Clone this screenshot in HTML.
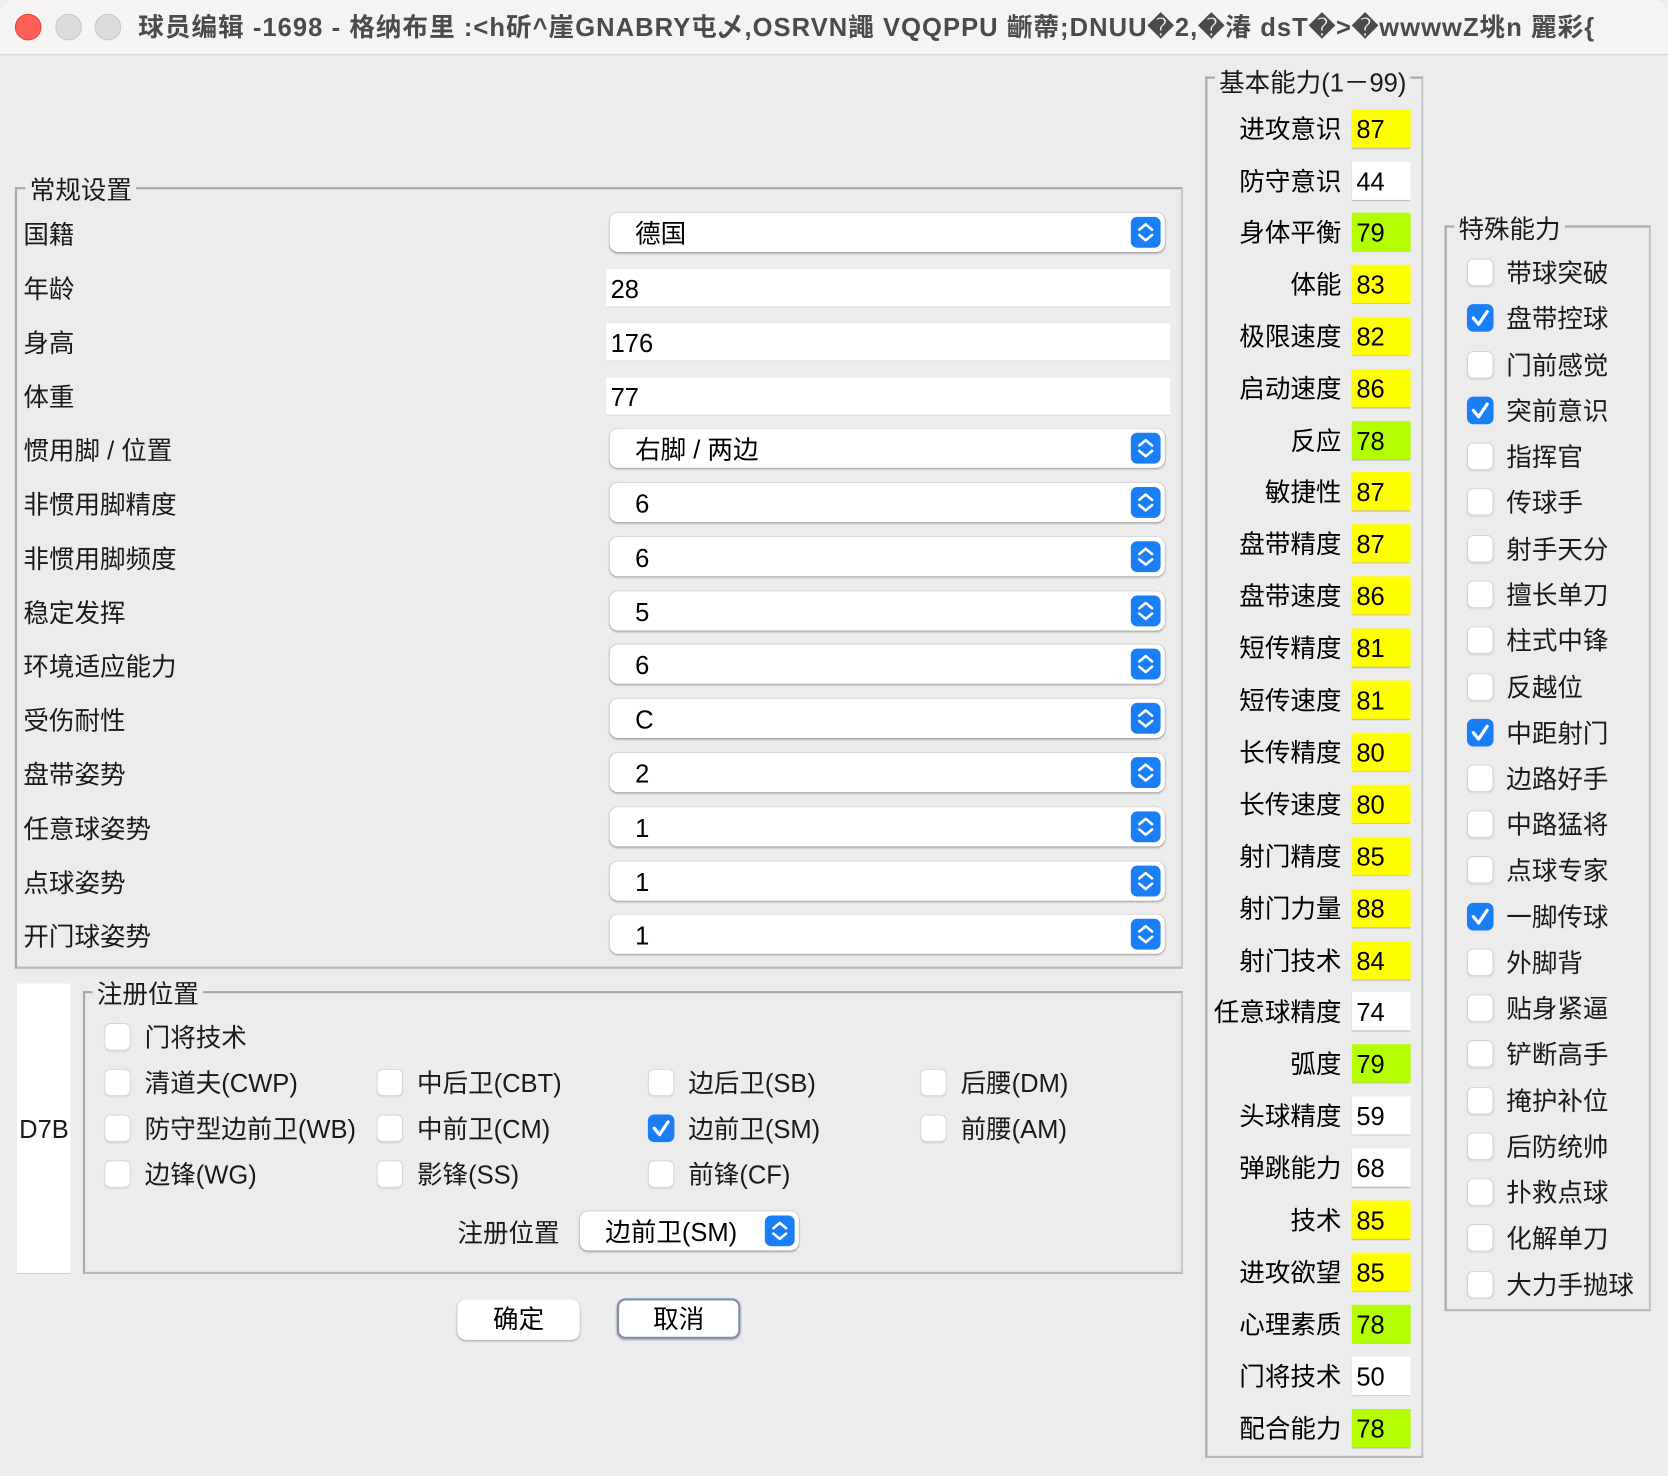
<!DOCTYPE html>
<html><head><meta charset="utf-8"><style>
html,body{margin:0;padding:0;background:#ececec;overflow:hidden}
body{width:1668px;height:1476px;font-family:"Liberation Sans","Noto Sans CJK SC",sans-serif}
#w{position:absolute;left:0;top:0;width:1568px;height:1388px;transform:scale(1.06378,1.0634);transform-origin:0 0;background:#ececec;border-radius:14px;overflow:hidden}
#w *{box-sizing:border-box}
.a{position:absolute}
.t{position:absolute;font-size:24px;line-height:40px;height:36px;color:#1a1a1a;white-space:nowrap}
.g{position:absolute;border:2px solid #a8a8a8;border-right-color:#c8c8c8;border-bottom-color:#b8b8b8}
.lg{position:absolute;font-size:24px;line-height:33px;background:#ececec;padding:0 4px;color:#1a1a1a;white-space:nowrap}
.cb{position:absolute;left:573px;width:522px;height:37px;background:#fff;border-radius:8px;box-shadow:0 1px 2px rgba(0,0,0,.3),0 0 0 .5px rgba(0,0,0,.12)}
.cb span{position:absolute;left:24px;top:0;font-size:24px;line-height:41px}
.st{position:absolute;right:4px;top:4px;width:28px;height:29px;background:#1a7ff6;border-radius:6px}
.tf{position:absolute;left:570px;width:530px;height:36px;background:#fff;border-bottom:1px solid #d8d8d8}
.tf span{position:absolute;left:4px;font-size:24px;line-height:40px}
.v{position:absolute;left:1271px;width:55px;height:36px;font-size:24px;line-height:40px;padding-left:4px;box-shadow:0 1px 1px rgba(0,0,0,.25)}
.Y{background:#ffff00}.G{background:#b3ff00}.W{background:#fff}
.r{position:absolute;right:307px;font-size:24px;line-height:40px;height:36px;white-space:nowrap}
.ck{position:absolute;width:25px;height:26px;background:#fff;border-radius:6px;box-shadow:0 0 0 1px #d4d4d4 inset,0 1px 1px rgba(0,0,0,.08)}
.ck.on{background:#1a7ff6;box-shadow:none}
.btn{position:absolute;height:38px;background:#fff;border-radius:8px;font-size:24px;line-height:40px;text-align:center;box-shadow:0 1px 2px rgba(0,0,0,.3)}
</style></head><body><div id="w">
<div class="a" style="left:0;top:0;width:1568px;height:52px;background:#f6f4f3;border-bottom:1px solid #d0d0d0"></div>
<div class="a" style="left:14px;top:13px;width:25px;height:25px;border-radius:50%;background:#fe5f57;border:1px solid #e0443e"></div>
<div class="a" style="left:52px;top:13px;width:25px;height:25px;border-radius:50%;background:#dcdcdc;border:1px solid #c8c8c8"></div>
<div class="a" style="left:89px;top:13px;width:25px;height:25px;border-radius:50%;background:#dcdcdc;border:1px solid #c8c8c8"></div>
<div class="t" style="left:130px;top:7px;font-weight:bold;color:#4b4b4b;font-size:24px;letter-spacing:1px">球员编辑 -1698 - 格纳布里 :&lt;h斫^崖GNABRY屯乄,OSRVN譝 VQQPPU 齭蔕;DNUU�2,�湷 dsT�&gt;�wwwwZ垗n 麗彩{</div>

<!-- general -->
<div class="g" style="left:14px;top:176px;width:1098px;height:735px"></div>
<div class="lg" style="left:24px;top:163px">常规设置</div>
<div class="t" style="left:22px;top:202px">国籍</div>
<div class="t" style="left:22px;top:253px">年龄</div>
<div class="t" style="left:22px;top:304px">身高</div>
<div class="t" style="left:22px;top:355px">体重</div>
<div class="t" style="left:22px;top:405px">惯用脚 / 位置</div>
<div class="t" style="left:22px;top:456px">非惯用脚精度</div>
<div class="t" style="left:22px;top:507px">非惯用脚频度</div>
<div class="t" style="left:22px;top:558px">稳定发挥</div>
<div class="t" style="left:22px;top:608px">环境适应能力</div>
<div class="t" style="left:22px;top:659px">受伤耐性</div>
<div class="t" style="left:22px;top:710px">盘带姿势</div>
<div class="t" style="left:22px;top:761px">任意球姿势</div>
<div class="t" style="left:22px;top:812px">点球姿势</div>
<div class="t" style="left:22px;top:862px">开门球姿势</div>

<div class="cb" style="top:200px"><span>德国</span><div class="st"><svg width="28" height="29"><path d="M8 12l6-5 6 5M8 17l6 5 6-5" stroke="#fff" stroke-width="2.4" fill="none" stroke-linecap="round" stroke-linejoin="round"/></svg></div></div>
<div class="tf" style="top:253px"><span>28</span></div>
<div class="tf" style="top:304px"><span>176</span></div>
<div class="tf" style="top:355px"><span>77</span></div>
<div class="cb" style="top:403px"><span>右脚 / 两边</span><div class="st"><svg width="28" height="29"><path d="M8 12l6-5 6 5M8 17l6 5 6-5" stroke="#fff" stroke-width="2.4" fill="none" stroke-linecap="round" stroke-linejoin="round"/></svg></div></div>
<div class="cb" style="top:454px"><span>6</span><div class="st"><svg width="28" height="29"><path d="M8 12l6-5 6 5M8 17l6 5 6-5" stroke="#fff" stroke-width="2.4" fill="none" stroke-linecap="round" stroke-linejoin="round"/></svg></div></div>
<div class="cb" style="top:505px"><span>6</span><div class="st"><svg width="28" height="29"><path d="M8 12l6-5 6 5M8 17l6 5 6-5" stroke="#fff" stroke-width="2.4" fill="none" stroke-linecap="round" stroke-linejoin="round"/></svg></div></div>
<div class="cb" style="top:556px"><span>5</span><div class="st"><svg width="28" height="29"><path d="M8 12l6-5 6 5M8 17l6 5 6-5" stroke="#fff" stroke-width="2.4" fill="none" stroke-linecap="round" stroke-linejoin="round"/></svg></div></div>
<div class="cb" style="top:606px"><span>6</span><div class="st"><svg width="28" height="29"><path d="M8 12l6-5 6 5M8 17l6 5 6-5" stroke="#fff" stroke-width="2.4" fill="none" stroke-linecap="round" stroke-linejoin="round"/></svg></div></div>
<div class="cb" style="top:657px"><span>C</span><div class="st"><svg width="28" height="29"><path d="M8 12l6-5 6 5M8 17l6 5 6-5" stroke="#fff" stroke-width="2.4" fill="none" stroke-linecap="round" stroke-linejoin="round"/></svg></div></div>
<div class="cb" style="top:708px"><span>2</span><div class="st"><svg width="28" height="29"><path d="M8 12l6-5 6 5M8 17l6 5 6-5" stroke="#fff" stroke-width="2.4" fill="none" stroke-linecap="round" stroke-linejoin="round"/></svg></div></div>
<div class="cb" style="top:759px"><span>1</span><div class="st"><svg width="28" height="29"><path d="M8 12l6-5 6 5M8 17l6 5 6-5" stroke="#fff" stroke-width="2.4" fill="none" stroke-linecap="round" stroke-linejoin="round"/></svg></div></div>
<div class="cb" style="top:810px"><span>1</span><div class="st"><svg width="28" height="29"><path d="M8 12l6-5 6 5M8 17l6 5 6-5" stroke="#fff" stroke-width="2.4" fill="none" stroke-linecap="round" stroke-linejoin="round"/></svg></div></div>
<div class="cb" style="top:860px"><span>1</span><div class="st"><svg width="28" height="29"><path d="M8 12l6-5 6 5M8 17l6 5 6-5" stroke="#fff" stroke-width="2.4" fill="none" stroke-linecap="round" stroke-linejoin="round"/></svg></div></div>

<!-- register -->
<div class="a" style="left:16px;top:925px;width:50px;height:273px;background:#fff;border-bottom:1px solid #ccc;overflow:hidden"><div class="t" style="left:2px;top:118px">D7B</div></div>
<div class="g" style="left:78px;top:932px;width:1034px;height:266px"></div>
<div class="lg" style="left:87px;top:919px">注册位置</div>
<div class="ck" style="left:98px;top:962px"></div><div class="t" style="left:136px;top:957px">门将技术</div>
<div class="ck" style="left:98px;top:1005px"></div><div class="t" style="left:136px;top:1000px">清道夫(CWP)</div>
<div class="ck" style="left:354px;top:1005px"></div><div class="t" style="left:392px;top:1000px">中后卫(CBT)</div>
<div class="ck" style="left:609px;top:1005px"></div><div class="t" style="left:647px;top:1000px">边后卫(SB)</div>
<div class="ck" style="left:865px;top:1005px"></div><div class="t" style="left:903px;top:1000px">后腰(DM)</div>
<div class="ck" style="left:98px;top:1048px"></div><div class="t" style="left:136px;top:1043px">防守型边前卫(WB)</div>
<div class="ck" style="left:354px;top:1048px"></div><div class="t" style="left:392px;top:1043px">中前卫(CM)</div>
<div class="ck on" style="left:609px;top:1048px"><svg width="25" height="26"><path d="M6 13l5 6 8-12" stroke="#fff" stroke-width="3" fill="none" stroke-linecap="round" stroke-linejoin="round"/></svg></div><div class="t" style="left:647px;top:1043px">边前卫(SM)</div>
<div class="ck" style="left:865px;top:1048px"></div><div class="t" style="left:903px;top:1043px">前腰(AM)</div>
<div class="ck" style="left:98px;top:1091px"></div><div class="t" style="left:136px;top:1086px">边锋(WG)</div>
<div class="ck" style="left:354px;top:1091px"></div><div class="t" style="left:392px;top:1086px">影锋(SS)</div>
<div class="ck" style="left:609px;top:1091px"></div><div class="t" style="left:647px;top:1086px">前锋(CF)</div>
<div class="t" style="left:430px;top:1141px">注册位置</div>
<div class="cb" style="left:545px;width:206px;top:1139px"><span>边前卫(SM)</span><div class="st"><svg width="28" height="29"><path d="M8 12l6-5 6 5M8 17l6 5 6-5" stroke="#fff" stroke-width="2.4" fill="none" stroke-linecap="round" stroke-linejoin="round"/></svg></div></div>

<div class="btn" style="left:430px;top:1222px;width:115px">确定</div>
<div class="btn" style="left:580px;top:1221px;width:116px;border:2px solid #7e8fa6;line-height:38px">取消</div>

<!-- stats -->
<div class="g" style="left:1133px;top:72px;width:205px;height:1299px"></div>
<div class="lg" style="left:1142px;top:62px">基本能力(1－99)</div>
<div class="r" style="top:103px">进攻意识</div><div class="v Y" style="top:103px">87</div>
<div class="r" style="top:152px">防守意识</div><div class="v W" style="top:152px">44</div>
<div class="r" style="top:200px">身体平衡</div><div class="v G" style="top:200px">79</div>
<div class="r" style="top:249px">体能</div><div class="v Y" style="top:249px">83</div>
<div class="r" style="top:298px">极限速度</div><div class="v Y" style="top:298px">82</div>
<div class="r" style="top:347px">启动速度</div><div class="v Y" style="top:347px">86</div>
<div class="r" style="top:396px">反应</div><div class="v G" style="top:396px">78</div>
<div class="r" style="top:444px">敏捷性</div><div class="v Y" style="top:444px">87</div>
<div class="r" style="top:493px">盘带精度</div><div class="v Y" style="top:493px">87</div>
<div class="r" style="top:542px">盘带速度</div><div class="v Y" style="top:542px">86</div>
<div class="r" style="top:591px">短传精度</div><div class="v Y" style="top:591px">81</div>
<div class="r" style="top:640px">短传速度</div><div class="v Y" style="top:640px">81</div>
<div class="r" style="top:689px">长传精度</div><div class="v Y" style="top:689px">80</div>
<div class="r" style="top:738px">长传速度</div><div class="v Y" style="top:738px">80</div>
<div class="r" style="top:787px">射门精度</div><div class="v Y" style="top:787px">85</div>
<div class="r" style="top:836px">射门力量</div><div class="v Y" style="top:836px">88</div>
<div class="r" style="top:885px">射门技术</div><div class="v Y" style="top:885px">84</div>
<div class="r" style="top:933px">任意球精度</div><div class="v W" style="top:933px">74</div>
<div class="r" style="top:982px">弧度</div><div class="v G" style="top:982px">79</div>
<div class="r" style="top:1031px">头球精度</div><div class="v W" style="top:1031px">59</div>
<div class="r" style="top:1080px">弹跳能力</div><div class="v W" style="top:1080px">68</div>
<div class="r" style="top:1129px">技术</div><div class="v Y" style="top:1129px">85</div>
<div class="r" style="top:1178px">进攻欲望</div><div class="v Y" style="top:1178px">85</div>
<div class="r" style="top:1227px">心理素质</div><div class="v G" style="top:1227px">78</div>
<div class="r" style="top:1276px">门将技术</div><div class="v W" style="top:1276px">50</div>
<div class="r" style="top:1325px">配合能力</div><div class="v G" style="top:1325px">78</div>

<!-- special -->
<div class="g" style="left:1358px;top:212px;width:194px;height:1021px"></div>
<div class="lg" style="left:1367px;top:200px">特殊能力</div>
<div class="ck" style="left:1379px;top:243px"></div><div class="t" style="left:1416px;top:238px">带球突破</div>
<div class="ck on" style="left:1379px;top:286px"><svg width="25" height="26"><path d="M6 13l5 6 8-12" stroke="#fff" stroke-width="3" fill="none" stroke-linecap="round" stroke-linejoin="round"/></svg></div><div class="t" style="left:1416px;top:281px">盘带控球</div>
<div class="ck" style="left:1379px;top:330px"></div><div class="t" style="left:1416px;top:325px">门前感觉</div>
<div class="ck on" style="left:1379px;top:373px"><svg width="25" height="26"><path d="M6 13l5 6 8-12" stroke="#fff" stroke-width="3" fill="none" stroke-linecap="round" stroke-linejoin="round"/></svg></div><div class="t" style="left:1416px;top:368px">突前意识</div>
<div class="ck" style="left:1379px;top:416px"></div><div class="t" style="left:1416px;top:411px">指挥官</div>
<div class="ck" style="left:1379px;top:459px"></div><div class="t" style="left:1416px;top:454px">传球手</div>
<div class="ck" style="left:1379px;top:503px"></div><div class="t" style="left:1416px;top:498px">射手天分</div>
<div class="ck" style="left:1379px;top:546px"></div><div class="t" style="left:1416px;top:541px">擅长单刀</div>
<div class="ck" style="left:1379px;top:589px"></div><div class="t" style="left:1416px;top:584px">柱式中锋</div>
<div class="ck" style="left:1379px;top:633px"></div><div class="t" style="left:1416px;top:628px">反越位</div>
<div class="ck on" style="left:1379px;top:676px"><svg width="25" height="26"><path d="M6 13l5 6 8-12" stroke="#fff" stroke-width="3" fill="none" stroke-linecap="round" stroke-linejoin="round"/></svg></div><div class="t" style="left:1416px;top:671px">中距射门</div>
<div class="ck" style="left:1379px;top:719px"></div><div class="t" style="left:1416px;top:714px">边路好手</div>
<div class="ck" style="left:1379px;top:762px"></div><div class="t" style="left:1416px;top:757px">中路猛将</div>
<div class="ck" style="left:1379px;top:805px"></div><div class="t" style="left:1416px;top:800px">点球专家</div>
<div class="ck on" style="left:1379px;top:849px"><svg width="25" height="26"><path d="M6 13l5 6 8-12" stroke="#fff" stroke-width="3" fill="none" stroke-linecap="round" stroke-linejoin="round"/></svg></div><div class="t" style="left:1416px;top:844px">一脚传球</div>
<div class="ck" style="left:1379px;top:892px"></div><div class="t" style="left:1416px;top:887px">外脚背</div>
<div class="ck" style="left:1379px;top:935px"></div><div class="t" style="left:1416px;top:930px">贴身紧逼</div>
<div class="ck" style="left:1379px;top:978px"></div><div class="t" style="left:1416px;top:973px">铲断高手</div>
<div class="ck" style="left:1379px;top:1022px"></div><div class="t" style="left:1416px;top:1017px">掩护补位</div>
<div class="ck" style="left:1379px;top:1065px"></div><div class="t" style="left:1416px;top:1060px">后防统帅</div>
<div class="ck" style="left:1379px;top:1108px"></div><div class="t" style="left:1416px;top:1103px">扑救点球</div>
<div class="ck" style="left:1379px;top:1151px"></div><div class="t" style="left:1416px;top:1146px">化解单刀</div>
<div class="ck" style="left:1379px;top:1195px"></div><div class="t" style="left:1416px;top:1190px">大力手抛球</div>
</div></body></html>
